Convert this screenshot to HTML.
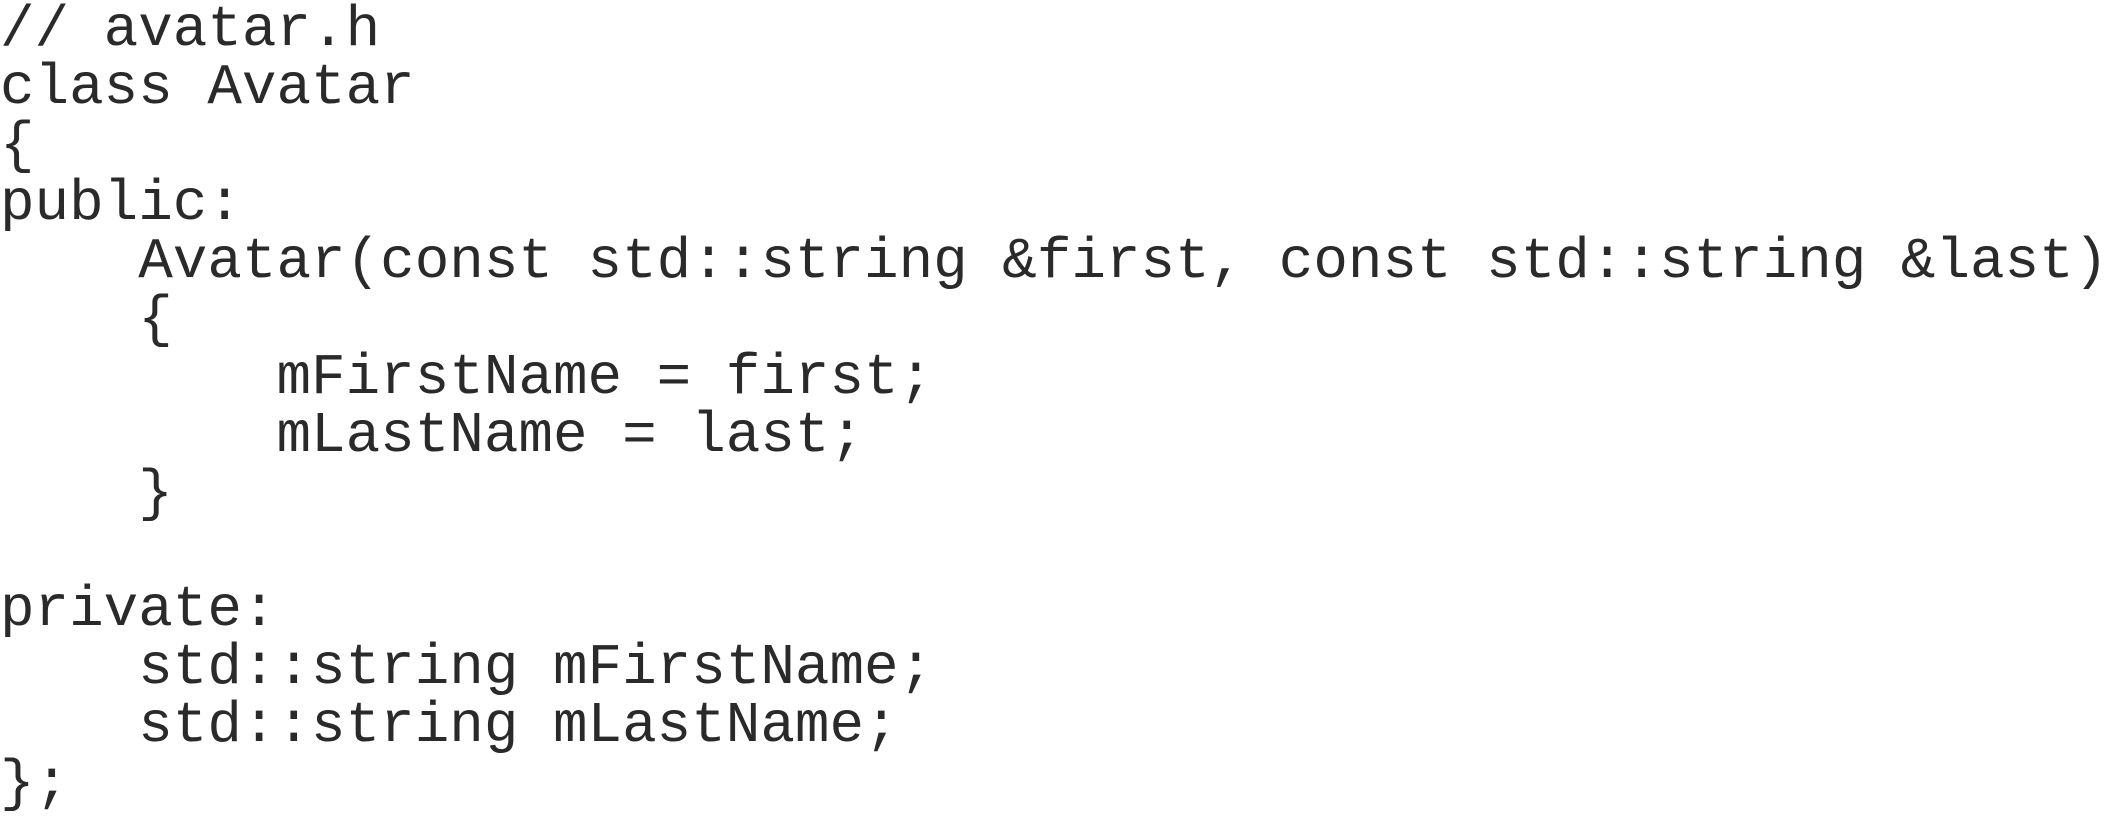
<!DOCTYPE html>
<html><head><meta charset="utf-8"><style>
html,body{margin:0;padding:0;background:#fff;width:2114px;height:834px;overflow:hidden}
pre{margin:0;position:absolute;left:0;top:2px;font-family:"Liberation Mono",monospace;font-size:57.6px;line-height:58px;color:#2a2a2a}
</style></head><body><pre>// avatar.h
class Avatar
{
public:
    Avatar(const std::string &amp;first, const std::string &amp;last)
    {
        mFirstName = first;
        mLastName = last;
    }

private:
    std::string mFirstName;
    std::string mLastName;
};</pre></body></html>
